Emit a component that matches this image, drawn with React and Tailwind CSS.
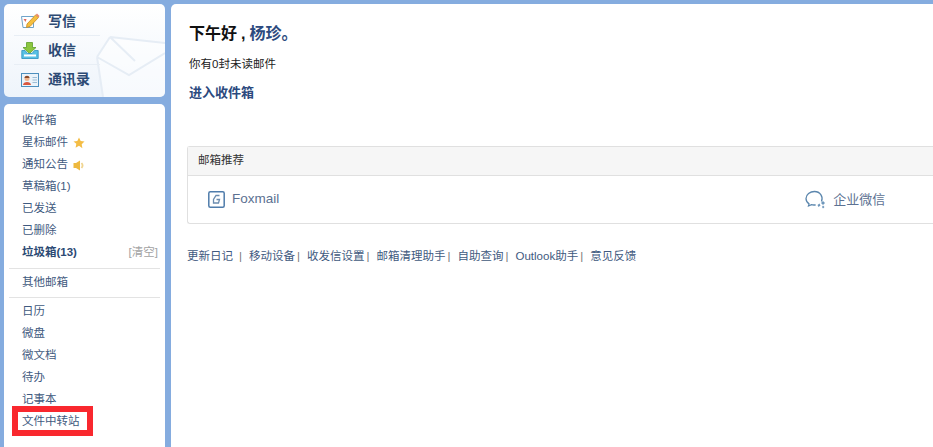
const FONT = "font-['Liberation_Sans','Noto_Sans_CJK_SC',sans-serif]";

function PenIcon() {
  return (
    <svg width="20" height="17" viewBox="0 0 20 17">
      <path d="M1.500 3.500h12v11h-10.500z" fill="#fff" stroke="#6fa3c9" strokeWidth="1" />
      <path d="M3.500 6l3 0-1 3z" fill="#e2675a" />
      <path d="M7 11l8.500-9 3 2.500L10 13.500l-3.500 1z" fill="#f5bf3f" stroke="#c98a1f" strokeWidth="0.800" />
      <path d="M15.500 2l3 2.500 1-1.500-2.500-2.500z" fill="#e98b6d" />
    </svg>
  );
}

function InboxIcon() {
  return (
    <svg width="18" height="17" viewBox="0 0 18 17">
      <path d="M5.500 0.500h6v5h3.500L8.500 11.500 2 5.500h3.500z" fill="#8cc63f" stroke="#5d9e2a" strokeWidth="0.800" />
      <path d="M0.800 8.500h3.200l2.500 3h4.500l2.500-3h3.700v8H0.800z" fill="#57c0e4" stroke="#2a8fbf" strokeWidth="0.800" />
      <path d="M3 12.500h12v2H3z" fill="#fff" />
    </svg>
  );
}

function ContactIcon() {
  return (
    <svg width="18" height="14" viewBox="0 0 18 14">
      <rect x="0.500" y="0.500" width="17" height="13" fill="#eaf3fa" stroke="#4d8fbd" />
      <circle cx="6" cy="5.500" r="2.500" fill="#f0b48c" />
      <path d="M3.500 5c0-3 5-3 5 0z" fill="#8a4a2a" />
      <path d="M2 12c0-4 8-4 8 0z" fill="#d9573f" />
      <path d="M11.500 4.500h4.500M11.500 7h4.500M11.500 9.500h4.500" stroke="#9dbdd6" />
    </svg>
  );
}

function Envelope() {
  return (
    <svg className="absolute right-0 bottom-0" width="72" height="68" viewBox="0 0 72 68">
      <path d="M17 8L72 14v54H10L4 28z" fill="#ffffff" fillOpacity="0.5" />
      <path d="M17 8L72 14M4 28L17 8M4 28l6 40M4 28l32 18 36-22M17 8l25 24" fill="none" stroke="#e6edf5" strokeWidth="2" />
    </svg>
  );
}

function StarIcon() {
  return (
    <svg width="12" height="12" viewBox="0 0 12 12">
      <path d="M6 0.500l1.700 3.600 3.800.5-2.800 2.700.7 3.900L6 8.800l-3.400 1.900.7-3.900L.5 4.600l3.800-.5z" fill="#f4bd45" />
    </svg>
  );
}

function SpeakerIcon() {
  return (
    <svg width="11" height="11" viewBox="0 0 11 11">
      <path d="M0.500 3h2.500L7 0.500v10L3 8H0.500z" fill="#eeb93f" />
      <path d="M8.500 3c1.200 1.400 1.200 3.600 0 5" fill="none" stroke="#f0d48f" strokeWidth="1.800" />
    </svg>
  );
}

function FoxmailIcon() {
  return (
    <svg width="17" height="17" viewBox="0 0 17 17">
      <rect x="0.800" y="0.800" width="15.400" height="15.400" rx="1.500" fill="none" stroke="#4f7cab" strokeWidth="1.500" />
      <path d="M11.500 4.500H8L5.500 8.500v3.500h5l1-3.500H8.500" fill="none" stroke="#6b8caf" strokeWidth="1.300" />
    </svg>
  );
}

function WeComIcon() {
  return (
    <svg width="22" height="20" viewBox="0 0 22 20">
      <path d="M16.500 11.500C18.500 6.500 15 1.500 9.500 1.500 5 1.500 1 4.500 1 8.500c0 2.200 1 4 3 5.300l-.5 2.200 3-1.300c1.200.3 2.800.4 4.200.1" fill="none" stroke="#5b86ad" strokeWidth="1.300" />
      <path d="M16 13l2-2 2 2-2 2zM12.500 15l2-1.500 1 2-2 1.500zM17 17l1-1.500 1.500 1.500-1.500 1.500z" fill="#6f97bb" />
    </svg>
  );
}

const groupOne = [
  { label: "收件箱" },
  { label: "星标邮件", icon: <StarIcon /> },
  { label: "通知公告", icon: <SpeakerIcon /> },
  { label: "草稿箱(1)" },
  { label: "已发送" },
  { label: "已删除" },
];

const groupTwo = ["日历", "微盘", "微文档", "待办", "记事本", "文件中转站"];

const footerLinks = ["更新日记", "移动设备", "收发信设置", "邮箱清理助手", "自助查询", "Outlook助手", "意见反馈"];

function QuickRow({ icon, label, line }) {
  return (
    <div className={`relative flex items-center h-[29px] ml-[10px] w-[86px] ${line ? "border-b border-[#e8eef5]" : ""}`}>
      <span className="w-[24px] ml-[4px] flex justify-center">{icon}</span>
      <span className="ml-[6px] text-[14px] font-bold text-[#2c4a74] whitespace-nowrap">{label}</span>
    </div>
  );
}

function MenuRow({ children }) {
  return <div className="flex items-center gap-[5px] h-[22px] pl-[18px] text-[11.5px] text-[#3f5a80] whitespace-nowrap">{children}</div>;
}

export default function App() {
  return (
    <div className={`${FONT} w-[933px] h-[447px] overflow-hidden bg-[#85acdf] flex pt-[4px] pl-[4px] gap-[6px]`}>
      {/* SIDEBAR */}
      <div className="w-[161px] flex flex-col gap-[7px] shrink-0">
        <div className="relative h-[93px] rounded-[5px] bg-gradient-to-b from-white to-[#eef4fb] overflow-hidden pt-[3px]">
          <Envelope />
          <QuickRow icon={<PenIcon />} label="写信" line />
          <QuickRow icon={<InboxIcon />} label="收信" line />
          <QuickRow icon={<ContactIcon />} label="通讯录" />
        </div>

        <div className="relative flex-1 bg-white rounded-t-[5px] pt-[6px]">
          {groupOne.map((item) => (
            <MenuRow key={item.label}>
              {item.label}
              {item.icon}
            </MenuRow>
          ))}
          <div className="flex items-center justify-between h-[22px] pl-[18px] pr-[7px] text-[11.5px] whitespace-nowrap">
            <span className="font-bold text-[#2c4a74]">垃圾箱(13)</span>
            <span className="text-[#a3a3a3]">[清空]</span>
          </div>
          <div className="mx-[5px] mt-[4px] border-t border-[#e3e3e3]" />
          <div className="mt-[3px]">
            <MenuRow>其他邮箱</MenuRow>
          </div>
          <div className="mx-[5px] mt-[3px] mb-[3px] border-t border-[#e3e3e3]" />
          {groupTwo.map((label) => (
            <MenuRow key={label}>{label}</MenuRow>
          ))}
          {/* red annotation */}
          <div className="absolute left-[8px] top-[302px] w-[81px] h-[30px] border-[6px] border-[#f9282e]" />
        </div>
      </div>

      {/* MAIN */}
      <div className="flex-1 bg-white rounded-tl-[5px] pt-[20px]">
        <div className="pl-[18px]">
          <h1 className="text-[16px] leading-[20px] font-bold text-[#111]">
            下午好<span className="ml-[4px]">,</span>
            <span className="ml-[4px] text-[#2c4a7e]">杨珍。</span>
          </h1>
          <p className="mt-[12px] text-[11.5px] leading-[16px] text-[#222]">你有0封未读邮件</p>
          <p className="mt-[12px] text-[13px] leading-[18px] font-bold text-[#2c4a7e]">进入收件箱</p>
        </div>

        <div className="ml-[16px] mt-[44px] border border-[#e0e0e0] rounded-l-[3px] border-r-0">
          <div className="h-[29px] flex items-center pl-[10px] bg-[#f6f6f6] border-b border-[#e0e0e0] text-[11.5px] text-[#333]">
            邮箱推荐
          </div>
          <div className="h-[47px] flex items-center pl-[20px]">
            <FoxmailIcon />
            <span className="ml-[7px] text-[13.5px] text-[#5c7192]">Foxmail</span>
            <span className="ml-[526px]">
              <WeComIcon />
            </span>
            <span className="ml-[6px] text-[13px] text-[#5c7192]">企业微信</span>
          </div>
        </div>

        <div className="ml-[16px] mt-[24px] flex items-center text-[11.5px] leading-[16px] text-[#3f5a80] whitespace-nowrap">
          {footerLinks.map((link, i) => (
            <span key={link} className="flex items-center">
              {link}
              {i < footerLinks.length - 1 && <span className={`${i === 0 ? "ml-[6px]" : "ml-[2px]"} mr-[7px] text-[#777]`}>|</span>}
            </span>
          ))}
        </div>
      </div>
    </div>
  );
}
